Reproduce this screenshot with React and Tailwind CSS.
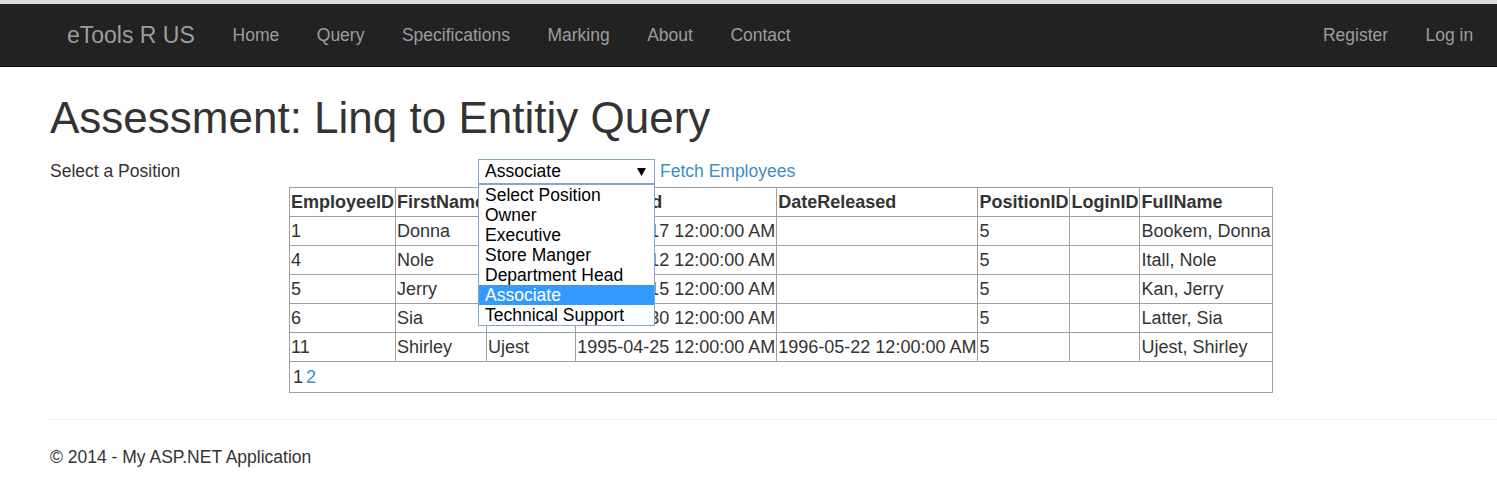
import React from 'react';

const navLinks = ['Home', 'Query', 'Specifications', 'Marking', 'About', 'Contact'];

const positions = [
  'Select Position',
  'Owner',
  'Executive',
  'Store Manger',
  'Department Head',
  'Associate',
  'Technical Support',
];

const headers = ['EmployeeID', 'FirstName', 'LastName', 'DateHired', 'DateReleased', 'PositionID', 'LoginID', 'FullName'];

const employees = [
  ['1', 'Donna', 'Bookem', '2001-03-17 12:00:00 AM', '', '5', '', 'Bookem, Donna'],
  ['4', 'Nole', 'Itall', '2004-08-12 12:00:00 AM', '', '5', '', 'Itall, Nole'],
  ['5', 'Jerry', 'Kan', '2009-02-15 12:00:00 AM', '', '5', '', 'Kan, Jerry'],
  ['6', 'Sia', 'Latter', '2010-06-30 12:00:00 AM', '', '5', '', 'Latter, Sia'],
  ['11', 'Shirley', 'Ujest', '1995-04-25 12:00:00 AM', '1996-05-22 12:00:00 AM', '5', '', 'Ujest, Shirley'],
];

export default function App() {
  return (
    <div className="min-h-[504px] bg-white text-[17.5px] leading-[25px] text-[#333] font-['Liberation_Sans',Arial,sans-serif]">
      {/* browser chrome strip */}
      <div className="h-[4px] bg-[#dcdcdc]" />

      {/* navbar */}
      <nav className="h-[63px] bg-[#222] border-b border-[#080808]">
        <div className="flex h-full items-start justify-between pl-[48px] pr-[5px]">
          <div className="flex">
            <a className="px-[19px] py-[19px] text-[23px] leading-[25px] text-[#9d9d9d]">eTools R US</a>
            {navLinks.map((l) => (
              <a key={l} className="px-[18.75px] py-[18.75px] leading-[25px] text-[#9d9d9d]">
                {l}
              </a>
            ))}
          </div>
          <div className="flex">
            <a className="px-[18.75px] py-[18.75px] leading-[25px] text-[#9d9d9d]">Register</a>
            <a className="px-[18.75px] py-[18.75px] leading-[25px] text-[#9d9d9d]">Log in</a>
          </div>
        </div>
      </nav>

      <div className="pl-[48px]">
        <div className="pl-[2px]">
          <h1 className="mt-[27px] text-[44px] leading-[48px] font-medium text-[#333]">
            Assessment: Linq to Entitiy Query
          </h1>

          {/* form row */}
          <div className="flex items-center mt-[17px]">
            <div className="w-[428px]">Select a Position</div>
            <div className="relative">
              <div className="flex h-[25px] w-[177px] items-center justify-between border border-[#86a5cf] bg-white pl-[6px] pr-[8px] text-black">
                <span>Associate</span>
                <svg width="9" height="8" viewBox="0 0 9 8">
                  <polygon points="0,0 9,0 4.5,8" fill="#000" />
                </svg>
              </div>
              <ul className="absolute left-0 top-[25px] z-10 w-[177px] border border-[#86a5cf] bg-white text-black">
                {positions.map((p) => (
                  <li
                    key={p}
                    className={`pl-[6px] leading-[20px] ${p === 'Associate' ? 'bg-[#3399ff] text-white' : ''}`}
                  >
                    {p}
                  </li>
                ))}
              </ul>
            </div>
            <a className="ml-[5px] text-[#428bca]">Fetch Employees</a>
          </div>

          {/* grid */}
          <table className="ml-[239px] mt-[3px] border-collapse border border-[#a0a0a0] text-[18px]">
            <thead>
              <tr>
                {headers.map((h) => (
                  <th key={h} className="border border-[#a0a0a0] px-[1px] py-px text-left font-bold leading-[26px] whitespace-nowrap">
                    {h}
                  </th>
                ))}
              </tr>
            </thead>
            <tbody>
              {employees.map((row, i) => (
                <tr key={i}>
                  {row.map((c, j) => (
                    <td key={j} className="border border-[#a0a0a0] px-[1px] py-px leading-[26px] whitespace-nowrap">
                      {c}
                    </td>
                  ))}
                </tr>
              ))}
              <tr>
                <td colSpan={8} className="border border-[#a0a0a0] px-[3px] py-[2px] leading-[26px]">
                  <span className="mr-[3px]">1</span>
                  <a className="text-[#428bca]">2</a>
                </td>
              </tr>
            </tbody>
          </table>
        </div>

        <hr className="mt-[26px] mb-[25px] border-t border-[#eee]" />

        <footer className="pl-[2px]">
          <p>© 2014 - My ASP.NET Application</p>
        </footer>
      </div>
    </div>
  );
}
